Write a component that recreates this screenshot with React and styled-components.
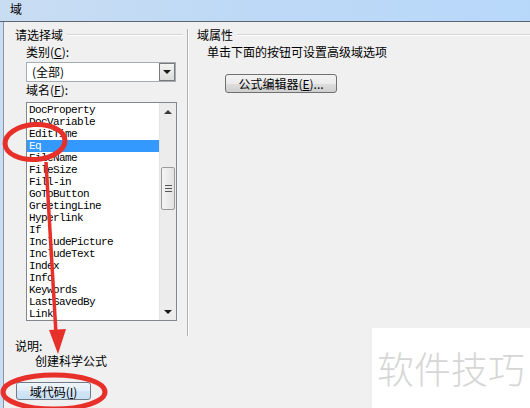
import React from "react";
import styled, { createGlobalStyle } from "styled-components";

const GlobalStyle = createGlobalStyle`
  html, body { margin: 0; padding: 0; }
  body {
    font-family: "Noto Sans CJK SC", "Noto Sans", sans-serif;
    font-size: 12px;
    color: #000;
    background: #f0f0f0;
  }
`;

const fieldNames = [
  "DocProperty",
  "DocVariable",
  "EditTime",
  "Eq",
  "FileName",
  "FileSize",
  "Fill-in",
  "GoToButton",
  "GreetingLine",
  "Hyperlink",
  "If",
  "IncludePicture",
  "IncludeText",
  "Index",
  "Info",
  "Keywords",
  "LastSavedBy",
  "Link",
];

const App = () => {
  const selected = "Eq";

  return (
    <>
      <GlobalStyle />
      <Screen>
        <TitleBar>域</TitleBar>
        <Body>
          <Frame>
            <LeftPane>
              <GroupHeader $indent={11}>
                <span>请选择域</span>
                <GroupLine />
              </GroupHeader>
              <Field>
                <Label>
                  类别(<Key>C</Key>):
                </Label>
                <Select>
                  <SelectText>(全部)</SelectText>
                  <DropButton>
                    <Arrow />
                  </DropButton>
                </Select>
                <Label $gap={1}>
                  域名(<Key>F</Key>):
                </Label>
                <ListBox>
                  <Items>
                    {fieldNames.map((name) => (
                      <Item key={name} $active={name === selected}>
                        {name}
                      </Item>
                    ))}
                  </Items>
                  <ScrollBar>
                    <ScrollArrow>
                      <Arrow $up />
                    </ScrollArrow>
                    <Track>
                      <Thumb>
                        <Grip />
                        <Grip />
                        <Grip />
                      </Thumb>
                    </Track>
                    <ScrollArrow>
                      <Arrow />
                    </ScrollArrow>
                  </ScrollBar>
                </ListBox>
              </Field>
              <DescLabel>说明:</DescLabel>
              <DescText>创建科学公式</DescText>
              <CodeButton>
                域代码(<Key>I</Key>)
              </CodeButton>
            </LeftPane>
            <Divider />
            <RightPane>
              <GroupHeader $indent={8}>
                <span>域属性</span>
                <GroupLine $full />
              </GroupHeader>
              <Hint>单击下面的按钮可设置高级域选项</Hint>
              <EditorButton>
                公式编辑器(<Key>E</Key>)...
              </EditorButton>
            </RightPane>
          </Frame>
        </Body>

        <Watermark>软件技巧</Watermark>

        <Marks width="530" height="408" viewBox="0 0 530 408">
          <ellipse
            cx="35"
            cy="142"
            rx="30"
            ry="17.5"
            fill="none"
            stroke="#e8302b"
            strokeWidth="5"
            transform="rotate(-4 35 142)"
          />
          <line x1="46" y1="162" x2="56" y2="334" stroke="#e8302b" strokeWidth="3.5" />
          <polygon points="49,330 66,329 58,354" fill="#e8302b" />
          <ellipse
            cx="54"
            cy="392"
            rx="51"
            ry="17"
            fill="none"
            stroke="#e8302b"
            strokeWidth="5"
          />
        </Marks>
      </Screen>
    </>
  );
};

const Screen = styled.div`
  position: relative;
  width: 530px;
  height: 408px;
  overflow: hidden;
  display: flex;
  flex-direction: column;
  background: #f0f0f0;
`;

const TitleBar = styled.div`
  flex: none;
  height: 22px;
  box-sizing: border-box;
  padding: 2px 0 0 10px;
  line-height: 14px;
  font-size: 12px;
  background: linear-gradient(to right, #c9ddf2 0%, #bed9f6 45%, #b8d8fa 100%);
  border-bottom: 1px solid #5d6773;
`;

const Body = styled.div`
  flex: 1;
  display: flex;
  border-left: 3px solid #c8ddf3;
`;

const Frame = styled.div`
  flex: 1;
  display: flex;
  border-left: 1px solid #8e959e;
`;

const LeftPane = styled.div`
  flex: none;
  width: 183px;
  display: flex;
  flex-direction: column;
  padding-top: 6px;
`;

const RightPane = styled.div`
  flex: 1;
  display: flex;
  flex-direction: column;
  padding-top: 6px;
`;

const Divider = styled.div`
  flex: none;
  align-self: flex-start;
  margin-top: 7px;
  width: 1px;
  height: 307px;
  background: #b4b4b4;
  border-right: 1px solid #ffffff;
`;

const GroupHeader = styled.div`
  display: flex;
  align-items: center;
  gap: 4px;
  height: 14px;
  line-height: 14px;
  padding-left: ${(p) => p.$indent}px;
  white-space: nowrap;
`;

const GroupLine = styled.div`
  flex: 1;
  height: 1px;
  margin-right: ${(p) => (p.$full ? 0 : 4)}px;
  background: #d5d5d5;
  border-bottom: 1px solid #ffffff;
`;

const Field = styled.div`
  display: flex;
  flex-direction: column;
  padding-left: 22px;
`;

const Label = styled.div`
  margin-top: ${(p) => (p.$gap !== undefined ? p.$gap : 3)}px;
  line-height: 14px;
`;

const Key = styled.span`
  text-decoration: underline;
`;

const Select = styled.div`
  margin-top: 3px;
  width: 150px;
  height: 20px;
  box-sizing: border-box;
  display: flex;
  background: #ffffff;
  border: 1px solid #a5acb5;
`;

const SelectText = styled.div`
  flex: 1;
  padding-left: 5px;
  line-height: 18px;
`;

const DropButton = styled.div`
  width: 16px;
  box-sizing: border-box;
  display: flex;
  align-items: center;
  justify-content: center;
  border: 1px solid #7a7a7a;
  background: linear-gradient(#f3f3f3, #dcdcdc);
`;

const Arrow = styled.div`
  width: 0;
  height: 0;
  border-left: 4px solid transparent;
  border-right: 4px solid transparent;
  ${(p) =>
    p.$up
      ? "border-bottom: 4px solid #3a3a3a;"
      : "border-top: 4px solid #1a1a1a;"}
`;

const ListBox = styled.div`
  margin-top: 5px;
  width: 151px;
  height: 219px;
  box-sizing: border-box;
  display: flex;
  background: #ffffff;
  border: 1px solid #828790;
`;

const Items = styled.div`
  flex: 1;
  display: flex;
  flex-direction: column;
  padding-top: 1px;
`;

const Item = styled.div`
  height: 12px;
  line-height: 12px;
  padding-left: 2px;
  font-family: "Liberation Mono", "DejaVu Sans Mono", monospace;
  font-size: 11px;
  letter-spacing: -0.6px;
  white-space: nowrap;
  color: ${(p) => (p.$active ? "#ffffff" : "#000000")};
  background: ${(p) => (p.$active ? "#3399ff" : "transparent")};
`;

const ScrollBar = styled.div`
  width: 17px;
  display: flex;
  flex-direction: column;
  background: #ececec;
  border-left: 1px solid #e3e3e3;
  box-sizing: border-box;
`;

const ScrollArrow = styled.div`
  height: 17px;
  display: flex;
  align-items: center;
  justify-content: center;
`;

const Track = styled.div`
  flex: 1;
  display: flex;
  flex-direction: column;
  align-items: center;
`;

const Thumb = styled.div`
  margin-top: 47px;
  width: 14px;
  height: 43px;
  box-sizing: border-box;
  display: flex;
  flex-direction: column;
  align-items: center;
  justify-content: center;
  gap: 2px;
  border: 1px solid #9a9a9a;
  border-radius: 2px;
  background: linear-gradient(to right, #f4f4f4, #e2e2e2);
`;

const Grip = styled.div`
  width: 7px;
  height: 1px;
  background: #555555;
`;

const DescLabel = styled.div`
  margin-top: 18px;
  padding-left: 11px;
  line-height: 14px;
`;

const DescText = styled.div`
  margin-top: 1px;
  padding-left: 31px;
  line-height: 14px;
`;

const CodeButton = styled.div`
  margin: 14px 0 0 12px;
  width: 75px;
  height: 18px;
  box-sizing: border-box;
  display: flex;
  align-items: center;
  justify-content: center;
  border: 1px solid #6f7b88;
  border-radius: 3px;
  background: linear-gradient(#eef5fb 0%, #e1edf8 50%, #d2e5f6 51%, #c8e0f5 100%);
`;

const Hint = styled.div`
  margin-top: 3px;
  padding-left: 18px;
  line-height: 14px;
  white-space: nowrap;
`;

const EditorButton = styled.div`
  margin: 15px 0 0 36px;
  width: 112px;
  height: 19px;
  box-sizing: border-box;
  display: flex;
  align-items: center;
  justify-content: center;
  border: 1px solid #707070;
  border-radius: 3px;
  background: linear-gradient(#f2f2f2 0%, #ebebeb 50%, #dddddd 51%, #cfcfcf 100%);
`;

const Watermark = styled.div`
  position: absolute;
  right: 0;
  bottom: 0;
  width: 158px;
  height: 80px;
  box-sizing: border-box;
  display: flex;
  align-items: center;
  padding: 0 0 0 5px;
  background: #ffffff;
  color: #d6d6d6;
  font-size: 37px;
  font-weight: 300;
  white-space: nowrap;
`;

const Marks = styled.svg`
  position: absolute;
  left: 0;
  top: 0;
  pointer-events: none;
`;

export default App;
